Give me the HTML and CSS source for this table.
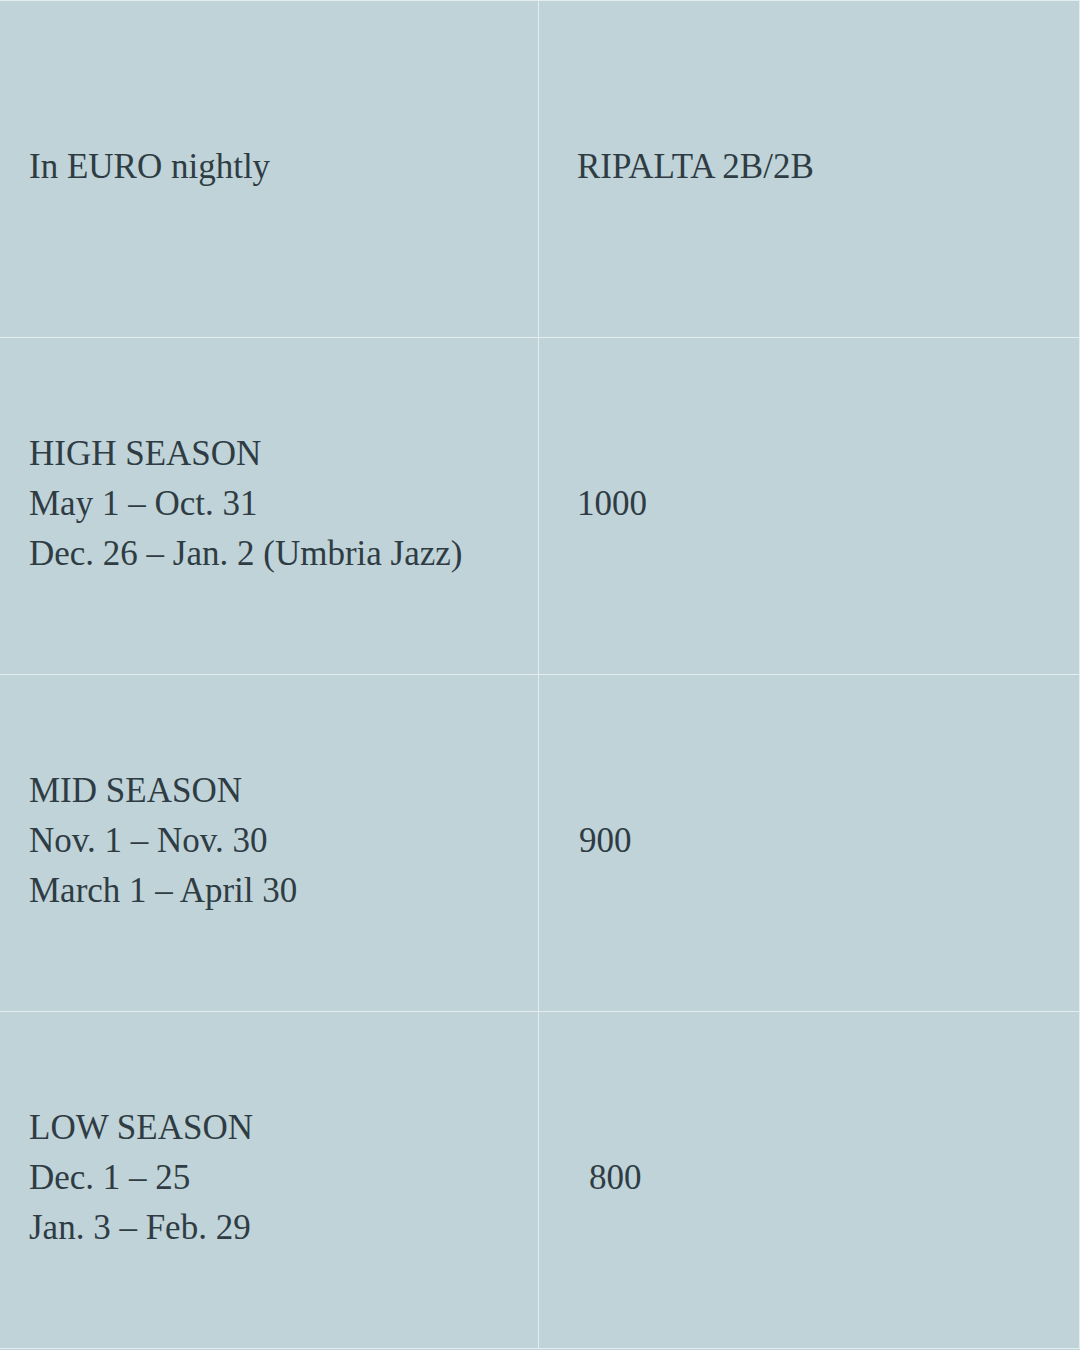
FILE: index.html
```html
<!DOCTYPE html>
<html>
<head>
<meta charset="utf-8">
<link rel="stylesheet" href="styles.css">
</head>
<body>
<div class="rates">
  <div class="cell label"><div>In EURO nightly</div></div>
  <div class="cell value"><div>RIPALTA 2B/2B</div></div>
  <div class="cell label"><div>HIGH SEASON<br>May 1 – Oct. 31<br>Dec. 26 – Jan. 2 (Umbria Jazz)</div></div>
  <div class="cell value"><div>1000</div></div>
  <div class="cell label"><div>MID SEASON<br>Nov. 1 – Nov. 30<br>March 1 – April 30</div></div>
  <div class="cell value"><div class="nudge1">900</div></div>
  <div class="cell label"><div>LOW SEASON<br>Dec. 1 – 25<br>Jan. 3 – Feb. 29</div></div>
  <div class="cell value"><div class="nudge2">800</div></div>
</div>
</body>
</html>
```
FILE: styles.css
```css
html, body {
  margin: 0;
  padding: 0;
  background: #bfd3d8;
}
.rates {
  display: grid;
  grid-template-columns: 538px 540px;
  grid-auto-rows: 336px;
  gap: 1px;
  padding: 1px 1px 1px 0;
  width: 1079px;
  background: #e3ecee;
  font-family: "Liberation Serif", serif;
  font-size: 35px;
  line-height: 50px;
  color: #2f3c44;
}
.cell {
  background: #bfd3d8;
  display: flex;
  align-items: center;
  padding-bottom: 5px;
  box-sizing: border-box;
}
.label {
  padding-left: 29px;
}
.value {
  padding-left: 38px;
}
.nudge1 {
  padding-left: 2px;
}
.nudge2 {
  padding-left: 12px;
}
```
